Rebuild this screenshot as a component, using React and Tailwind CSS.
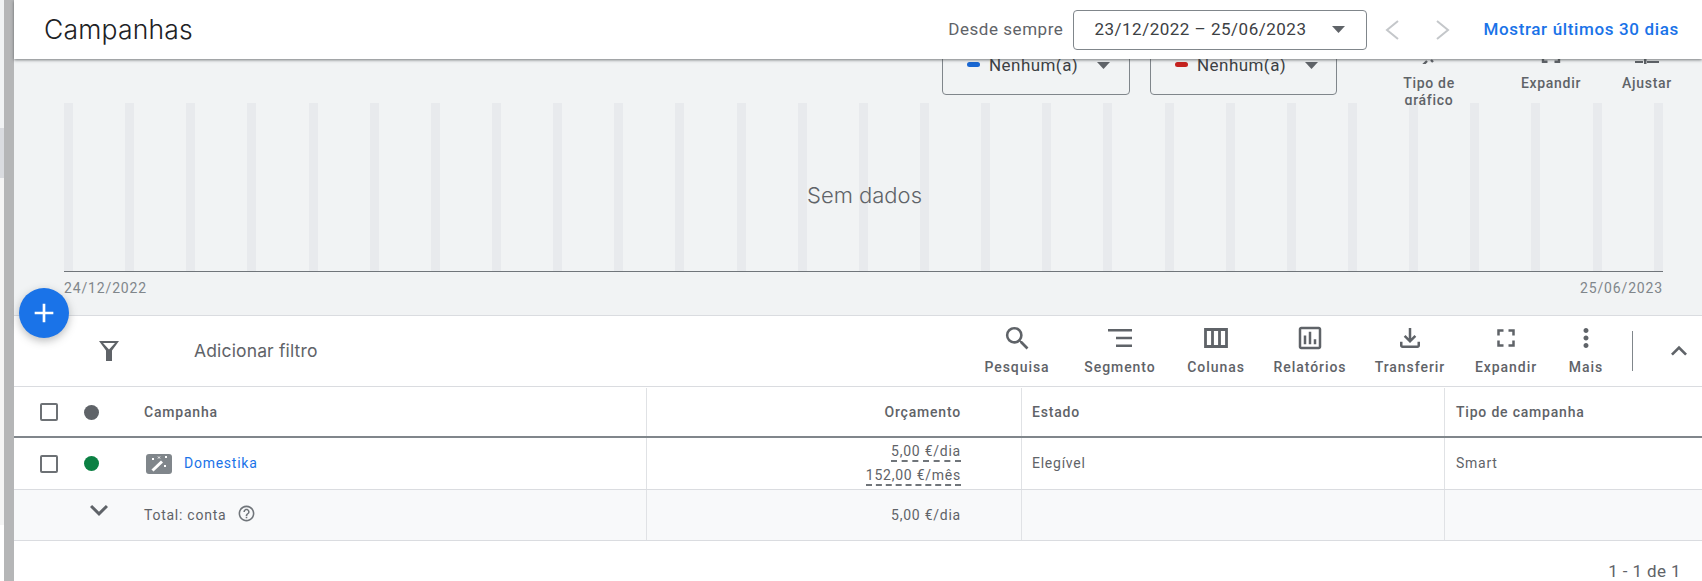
import React from "react";
import { MdSearch, MdOutlineAssessment, MdOutlineFileDownload, MdFullscreen, MdMoreVert, MdExpandLess, MdExpandMore, MdHelpOutline, MdAdd } from "react-icons/md";

const Caret = ({ className }) => (
  <svg width="13" height="7" viewBox="0 0 13 7" className={className}><path d="M0 0h13L6.500 7z" fill="#5f6368" /></svg>
);

const SegmentIcon = () => (
  <svg width="26" height="24" viewBox="0 0 26 24" fill="#5f6368"><path d="M1 3h24v2.400H1zM9 10.800h16v2.400H9zM9 18.600h16V21H9z" /></svg>
);
const ColumnsIcon = () => (
  <svg width="24" height="24" viewBox="0 0 24 24" fill="none" stroke="#5f6368" strokeWidth="2.8"><path d="M1.500 3.500h21v17h-21zM8.500 3.500v17M15.500 3.500v17" /></svg>
);
const Funnel = () => (
  <svg width="20" height="20" viewBox="0 0 20 20"><path d="M0 0h20l-7 9.500V20H7V9.500z M4 2l6 6.500L16 2z" fill="#5f6368" fillRule="evenodd" /></svg>
);
const Chevron = ({ left }) => (
  <svg width="14" height="20" viewBox="0 0 14 20" fill="none" stroke="#c4c7ca" strokeWidth="2">
    <path d={left ? "M13 1L2 10l11 9" : "M1 1l11 9-11 9"} />
  </svg>
);
const Wand = () => (
  <svg width="18" height="16" viewBox="0 0 18 16" stroke="#fff" fill="none">
    <path d="M2.500 14.500L12 5.500" strokeWidth="3" />
    <path d="M2 2l2 2M4 2L2 4M8 0.500l2 2M10 0.500l-2 2M15 0l2 2M17 0l-2 2M14 9l2 2M16 9l-2 2" strokeWidth="1" />
  </svg>
);

const tools = [
  { label: "Pesquisa", w: "w-[102px]", icon: <MdSearch size={31} color="#5f6368" /> },
  { label: "Segmento", w: "w-[104px]", icon: <SegmentIcon /> },
  { label: "Colunas", w: "w-[88px]", icon: <ColumnsIcon /> },
  { label: "Relatórios", w: "w-[100px]", icon: <MdOutlineAssessment size={30} color="#5f6368" /> },
  { label: "Transferir", w: "w-[100px]", icon: <MdOutlineFileDownload size={30} color="#5f6368" /> },
  { label: "Expandir", w: "w-[92px]", icon: <MdFullscreen size={30} color="#5f6368" /> },
  { label: "Mais", w: "w-[68px]", icon: <MdMoreVert size={30} color="#5f6368" /> },
];

const Dashed = ({ children }) => (
  <span className="border-b-2 border-dashed border-[#70757a] leading-[16px] pb-[1px]">{children}</span>
);

const Check = () => <div className="w-[18px] h-[18px] border-2 border-[#6d7175] rounded-[2px] shrink-0" />;

const Row = ({ className, a, b, c, d, e }) => (
  <div className={"flex " + className}>
    <div className="w-[26px] shrink-0" />
    <div className="w-[18px] shrink-0 flex items-center">{a}</div>
    <div className="w-[86px] shrink-0 flex items-center pl-[26px]">{b}</div>
    <div className="w-[503px] shrink-0 flex items-center border-r border-[#e0e2e5]">{c}</div>
    <div className="w-[375px] shrink-0 flex flex-col items-end justify-center pr-[60px] border-r border-[#e0e2e5]">{d}</div>
    <div className="w-[423px] shrink-0 flex items-center pl-[10px] border-r border-[#e0e2e5]">{e[0]}</div>
    <div className="flex-1 flex items-center pl-[11px]">{e[1]}</div>
  </div>
);

const chartLabel = "text-center text-[14px] font-medium text-[#5f6368] leading-[17px] tracking-[0.7px]";

export default function App() {
  return (
    <div className="flex w-[1702px] h-[581px] overflow-hidden bg-white font-['Roboto',sans-serif] text-[#3c4043]">
      <div className="w-1 shrink-0 flex flex-col">
        <div className="h-[128px] bg-[#f1f3f4]" />
        <div className="h-[50px] bg-[#dadce0]" />
        <div className="h-[347px] bg-[#f5f5f5]" />
        <div className="flex-1 bg-white" />
      </div>
      <div className="w-2.5 shrink-0 bg-[#b5b6b7]" />
      <div className="flex-1 flex flex-col relative min-w-0">
        <header className="h-[59px] shrink-0 bg-white relative z-10 shadow-[0_1px_3px_rgba(60,64,67,0.7)] flex items-center pl-[30px] pr-[23px]">
          <h1 className="text-[26.500px] font-['Inter',sans-serif] font-light text-[#202124] leading-none tracking-[0.2px] -mt-[1px]">Campanhas</h1>
          <span className="ml-auto text-[17px] text-[#5f6368] tracking-[0.55px]">Desde sempre</span>
          <div className="ml-[10px] w-[294px] h-[40px] border border-[#80868b] rounded-[4px] flex items-center pl-[20px] pr-[21px] text-[17px] text-[#3c4043] tracking-[0.5px]">
            <span>23/12/2022 – 25/06/2023</span>
            <Caret className="ml-auto" />
          </div>
          <div className="ml-[18px]"><Chevron left /></div>
          <div className="ml-[37px]"><Chevron /></div>
          <span className="ml-[33px] text-[17px] font-medium text-[#1a73e8] tracking-[0.65px]">Mostrar últimos 30 dias</span>
        </header>

        <section className="h-[256px] shrink-0 bg-[#f1f3f4] relative overflow-hidden">
          <div className="h-[44px] relative z-[1] flex items-start">
            <div className="w-[928px] shrink-0" />
            <div className="w-[188px] h-[60px] -mt-[24px] shrink-0 border border-[#80868b] rounded-[4px] flex items-end pb-[19px] pl-[24px]">
              <span className="w-[13px] h-[5px] rounded-full bg-[#1967d2] mb-[8px]" />
              <span className="ml-[9px] text-[17px] text-[#3c4043] tracking-[0.45px] leading-[20px]">Nenhum(a)</span>
              <Caret className="ml-[19px] mb-[6px]" />
            </div>
            <div className="w-[187px] h-[60px] -mt-[24px] ml-[20px] shrink-0 border border-[#80868b] rounded-[4px] flex items-end pb-[19px] pl-[24px]">
              <span className="w-[13px] h-[5px] rounded-full bg-[#c5221f] mb-[8px]" />
              <span className="ml-[9px] text-[17px] text-[#3c4043] tracking-[0.45px] leading-[20px]">Nenhum(a)</span>
              <Caret className="ml-[19px] mb-[6px]" />
            </div>
            <div className="w-[80px] ml-[52px] h-[71px] -mt-[25px] shrink-0 overflow-hidden flex flex-col items-center">
              <svg width="24" height="30" viewBox="0 0 24 30" className="shrink-0" fill="none" stroke="#5f6368" strokeWidth="2.400"><path d="M4 33L10 27M14 26l2 2" /></svg>
              <div className={"mt-[11px] " + chartLabel}>Tipo de gráfico</div>
            </div>
            <div className="w-[80px] ml-[42px] -mt-[25px] shrink-0 flex flex-col items-center">
              <svg width="20" height="30" viewBox="0 0 20 30" className="shrink-0" fill="none" stroke="#5f6368" strokeWidth="2.400"><path d="M2 20v7.800h4.500M18 20v7.800h-4.500" /></svg>
              <div className={"mt-[11px] " + chartLabel}>Expandir</div>
            </div>
            <div className="w-[80px] ml-[16px] -mt-[25px] shrink-0 flex flex-col items-center">
              <svg width="26" height="30" viewBox="0 0 26 30" className="shrink-0" fill="#5f6368"><path d="M1 27h8v2H1zM13 27h12v2H13zM10 22h2.500v8H10z" /></svg>
              <div className={"mt-[11px] " + chartLabel}>Ajustar</div>
            </div>
          </div>
          <div className="pl-[50px] pr-[39px]">
            <div className="h-[169px] flex justify-between border-b border-[#70757a]">
              {Array.from({ length: 27 }).map((_, i) => (
                <div key={i} className="w-[9px] bg-[#e8eaed]" />
              ))}
            </div>
            <div className="flex justify-between text-[14px] text-[#80868b] tracking-[0.85px] leading-[16px] mt-[8px]">
              <span>24/12/2022</span>
              <span>25/06/2023</span>
            </div>
          </div>
          <div className="absolute left-[793px] top-[122px] text-[22px] font-['Inter',sans-serif] font-light text-[#5f6368] leading-[28px]">Sem dados</div>
        </section>

        <button className="absolute left-[5px] top-[288px] z-20 w-[50px] h-[50px] rounded-full bg-[#1a73e8] flex items-center justify-center shadow-[0_3px_8px_rgba(60,64,67,0.35)]">
          <MdAdd size={32} color="#fff" />
        </button>

        <div className="h-[72px] shrink-0 flex items-stretch border-t border-b border-[#dadce0] bg-white">
          <div className="w-[105px] shrink-0 flex items-center justify-end"><Funnel /></div>
          <div className="ml-[75px] flex items-center text-[17.500px] font-['Inter',sans-serif] text-[#5f6368] tracking-[0.15px]">Adicionar filtro</div>
          <div className="ml-auto flex items-stretch">
            {tools.map((t) => (
              <div key={t.label} className={t.w + " flex flex-col items-center pt-[7px]"}>
                <div className="h-[30px] flex items-center justify-center">{t.icon}</div>
                <div className="mt-[6px] text-[14px] font-medium text-[#5f6368] tracking-[0.95px] leading-[17px]">{t.label}</div>
              </div>
            ))}
            <div className="w-[1px] h-[40px] bg-[#80868b] mt-[15px] ml-[12px]" />
            <div className="w-[69px] flex items-center justify-center pl-[22px]"><MdExpandLess size={32} color="#5f6368" /></div>
          </div>
        </div>

        <Row
          className="h-[51px] shrink-0 text-[14px] font-medium text-[#5f6368] tracking-[0.8px] border-b-2 border-[#80868b] pt-[1px]"
          a={<Check />}
          b={<div className="w-[15px] h-[15px] rounded-full bg-[#5f6368]" />}
          c={<span>Campanha</span>}
          d={<span>Orçamento</span>}
          e={[<span>Estado</span>, <span>Tipo de campanha</span>]}
        />
        <Row
          className="h-[52px] shrink-0 text-[14px] text-[#5f6368] tracking-[0.75px] border-b border-[#dadce0]"
          a={<Check />}
          b={<div className="w-[15px] h-[15px] rounded-full bg-[#0b8043]" />}
          c={
            <div className="flex items-center gap-[12px] ml-[2px]">
              <span className="w-[26px] h-[20px] rounded-[3px] bg-[#80868b] flex items-center justify-center"><Wand /></span>
              <span className="text-[#1a73e8]">Domestika</span>
            </div>
          }
          d={<><div className="h-[2px]" /><Dashed>5,00 €/dia</Dashed><div className="h-[5px]" /><Dashed>152,00 €/mês</Dashed></>}
          e={[<span>Elegível</span>, <span>Smart</span>]}
        />
        <Row
          className="h-[51px] shrink-0 text-[14px] text-[#5f6368] tracking-[0.75px] bg-[#f8f9fa] border-b border-[#dadce0]"
          a={null}
          b={<MdExpandMore size={36} color="#5f6368" className="-ml-[3px] -mt-[10px]" />}
          c={<div className="flex items-center"><span>Total: conta</span><MdHelpOutline size={19} color="#70757a" className="ml-[11px] -mt-[4px]" /></div>}
          d={<span>5,00 €/dia</span>}
          e={[null, null]}
        />
        <div className="flex-1 flex justify-end items-end pr-[21px] pb-[1px] text-[17px] text-[#5f6368] tracking-[0.4px] leading-[18px]">1 - 1 de 1</div>
      </div>
    </div>
  );
}
